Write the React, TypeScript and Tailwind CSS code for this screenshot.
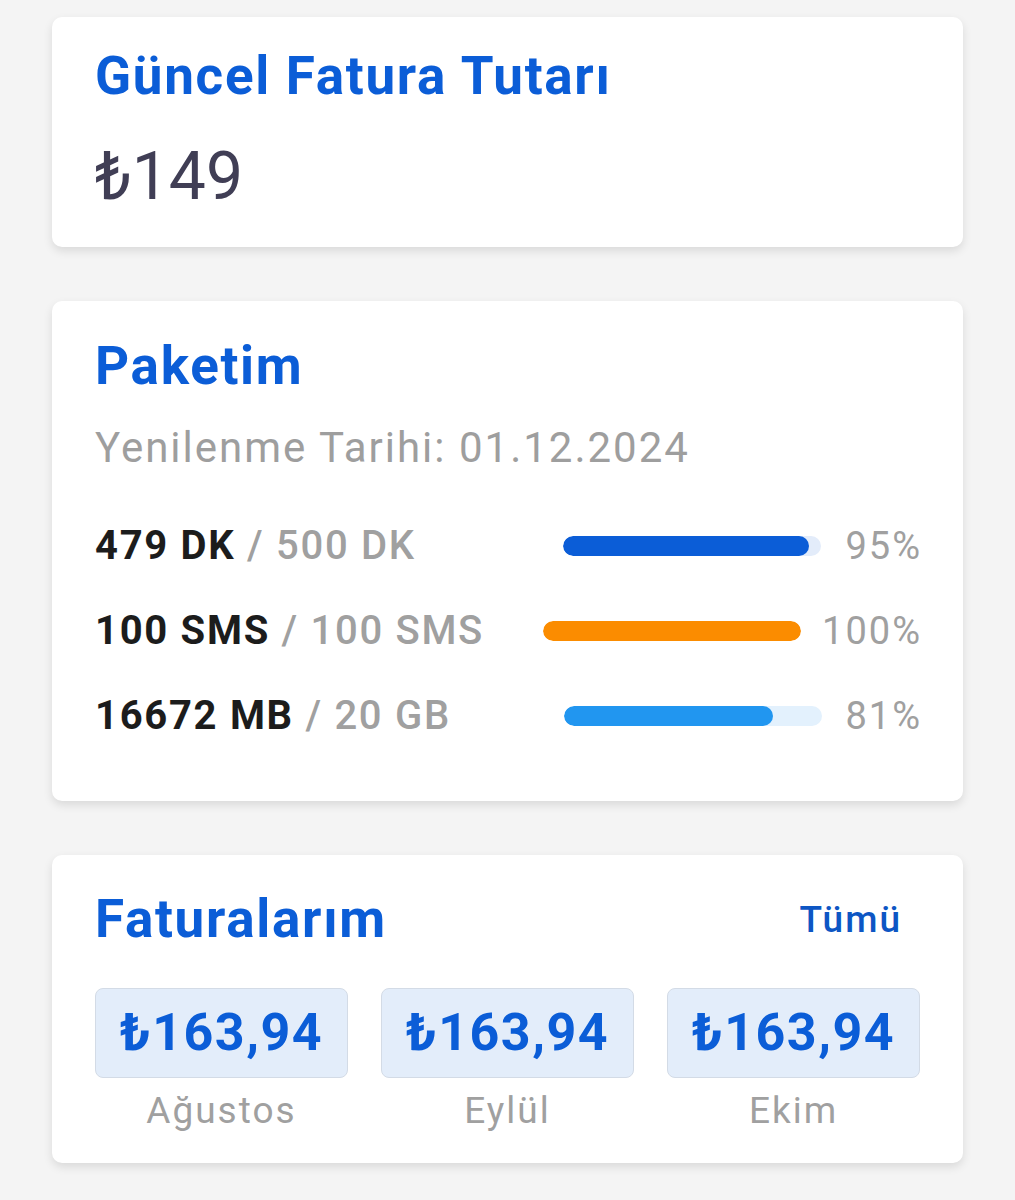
import type { ReactNode } from 'react'

interface UsageRow {
  used: string
  total: string
  percent: number
  fill: string
  track: string
  gap: string
}

const usages: UsageRow[] = [
  { used: '479 DK', total: '500 DK', percent: 95, fill: 'bg-[#0b5dd7]', track: 'bg-[#e3ecfa]', gap: 'mr-[24px]' },
  { used: '100 SMS', total: '100 SMS', percent: 100, fill: 'bg-[#fb8c00]', track: 'bg-[#fff0dc]', gap: 'mr-[21px]' },
  { used: '16672 MB', total: '20 GB', percent: 81, fill: 'bg-[#2196f0]', track: 'bg-[#e3f1fd]', gap: 'mr-[23px]' },
]

const bills = [
  { amount: '₺163,94', month: 'Ağustos' },
  { amount: '₺163,94', month: 'Eylül' },
  { amount: '₺163,94', month: 'Ekim' },
]

function Card({ children, className }: { children: ReactNode; className?: string }) {
  return (
    <div
      className={`rounded-[10px] bg-white px-[43px] shadow-[0_4px_10px_rgba(0,0,0,0.11)] ${className ?? ''}`}
    >
      {children}
    </div>
  )
}

function Title({ children }: { children: ReactNode }) {
  return <h2 className="text-[53px] font-bold leading-none tracking-[1.7px] text-[#0b5dd7]">{children}</h2>
}

export default function App() {
  return (
    <div
      className="min-h-[1200px] bg-[#f4f4f4] px-[52px] pt-[17px] pb-[36px]"
      style={{ fontFamily: 'Roboto, "Noto Sans", sans-serif' }}
    >
      <div className="flex w-[911px] flex-col gap-[54px]">
        <Card className="h-[230px] pt-[33px]">
          <Title>Güncel Fatura Tutarı</Title>
          <div className="mt-[41px] text-[66px] leading-none text-[#403e55]">₺149</div>
        </Card>

        <Card className="h-[500px] pt-[39px]">
          <Title>Paketim</Title>
          <div className="mt-[34px] text-[42px] leading-none tracking-[2px] text-[#9e9e9e]">
            Yenilenme Tarihi: 01.12.2024
          </div>
          <div className="mt-[57px] flex flex-col gap-[45px]">
            {usages.map((u) => (
              <div key={u.used} className="flex h-[40px] items-center">
                <div className="text-[40px] font-bold leading-none tracking-[1.7px] text-[#1c1c1c]">
                  {u.used}
                  <span className="font-medium text-[#a0a0a0]"> / {u.total}</span>
                </div>
                <div className="flex-1" />
                <div className={`h-[20px] w-[258px] overflow-hidden rounded-full ${u.track} ${u.gap}`}>
                  <div className={`h-full rounded-full ${u.fill}`} style={{ width: `${u.percent}%` }} />
                </div>
                <div className="mr-[-2px] text-[38px] leading-none tracking-[2px] text-[#a0a0a0]">{u.percent}%</div>
              </div>
            ))}
          </div>
        </Card>

        <Card className="h-[308px] pt-[38px]">
          <div className="flex items-center justify-between">
            <Title>Faturalarım</Title>
            <button className="mr-[18px] text-[37px] font-medium leading-none tracking-[2px] text-[#0d56c4]">
              Tümü
            </button>
          </div>
          <div className="mt-[42px] grid grid-cols-3 gap-[33px]">
            {bills.map((b) => (
              <div key={b.month} className="flex flex-col items-center">
                <div className="flex h-[90px] w-full items-center justify-center rounded-[8px] border border-[#d3dbe6] bg-[#e3edfa] text-[52px] font-bold leading-none tracking-[1.5px] text-[#0b5dd7]">
                  {b.amount}
                </div>
                <div className="mt-[14px] text-[37px] leading-none tracking-[2px] text-[#a0a0a0]">{b.month}</div>
              </div>
            ))}
          </div>
        </Card>
      </div>
    </div>
  )
}
